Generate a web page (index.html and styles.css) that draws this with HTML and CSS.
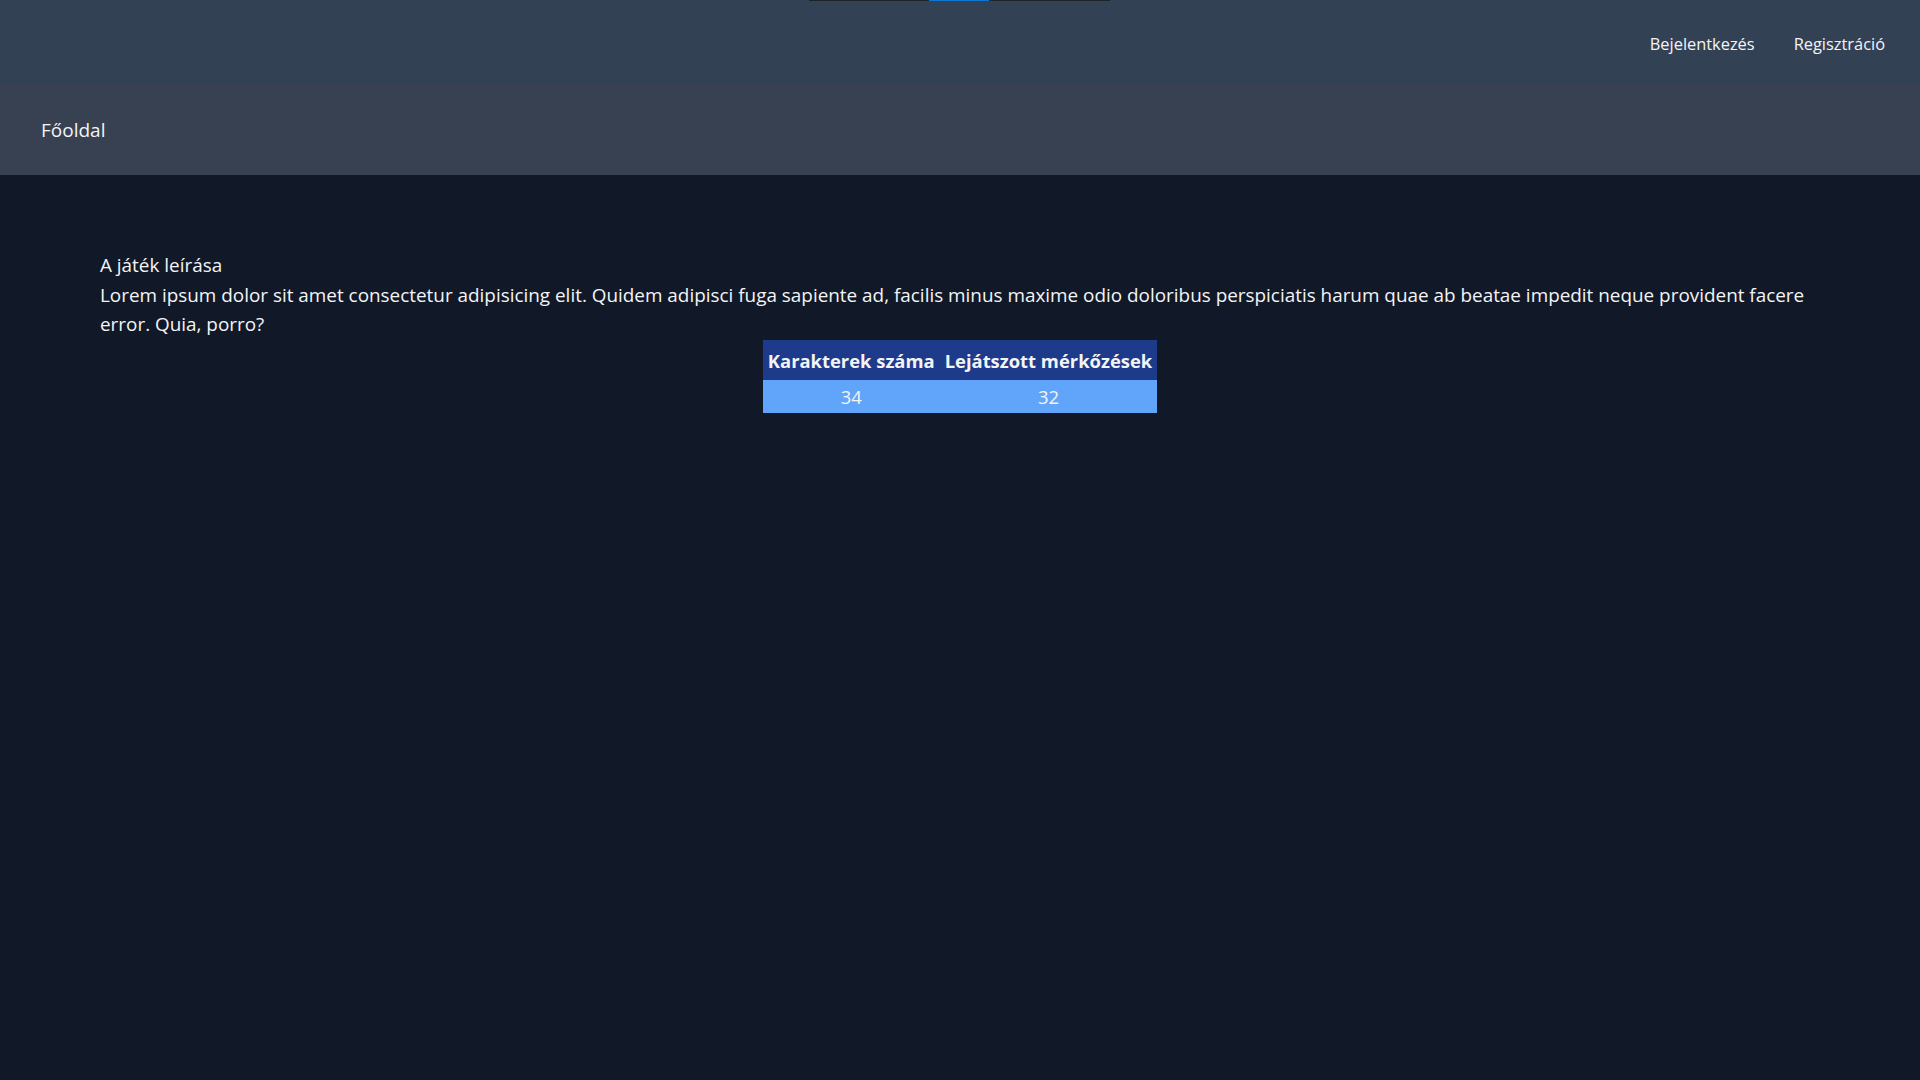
FILE: index.html
```html
<!DOCTYPE html>
<html lang="hu">
<head>
<meta charset="utf-8">
<title>Főoldal</title>
<link rel="stylesheet" href="styles.css">
</head>
<body>
<div class="loader"><span class="loader-fill"></span></div>
<header class="topbar">
  <a class="toplink" href="#">Bejelentkezés</a>
  <a class="toplink" href="#">Regisztráció</a>
</header>
<nav class="navbar">
  <a class="navlink" href="#">Főoldal</a>
</nav>
<main class="content">
  <h2 class="title">A játék leírása</h2>
  <p class="desc">Lorem ipsum dolor sit amet consectetur adipisicing elit. Quidem adipisci fuga sapiente ad, facilis minus maxime odio doloribus perspiciatis harum quae ab beatae impedit neque provident facere error. Quia, porro?</p>
  <table class="stats">
    <thead>
      <tr><th>Karakterek száma</th><th>Lejátszott mérkőzések</th></tr>
    </thead>
    <tbody>
      <tr><td>34</td><td>32</td></tr>
    </tbody>
  </table>
</main>
</body>
</html>
```
FILE: styles.css
```css
* { box-sizing: border-box; }
html, body { margin: 0; padding: 0; }
body {
  background: #111827;
  color: #f3f4f6;
  font-family: "Open Sans", "Noto Sans", sans-serif;
  min-height: 1080px;
  position: relative;
}
a { color: #f3f4f6; text-decoration: none; }

.loader {
  position: absolute;
  top: 0;
  left: 809px;
  width: 301px;
  height: 1px;
  background: #1f2328;
}
.loader-fill {
  position: absolute;
  left: 120px;
  top: 0;
  width: 60px;
  height: 1px;
  background: #0a78d4;
}

.topbar {
  height: 84px;
  background: #334155;
  display: flex;
  justify-content: flex-end;
  align-items: center;
  gap: 39px;
  padding: 3px 35px 0 0;
}
.toplink { font-size: 16.4px; }

.navbar {
  height: 91px;
  background: #374151;
  display: flex;
  align-items: center;
  padding: 0 41px;
}
.navlink { font-size: 19px; }

.content {
  padding: 76px 100px 0;
}
.title, .desc {
  margin: 0;
  font-size: 18.9px;
  font-weight: 400;
  line-height: 29.7px;
}
.stats {
  margin: 0 auto;
  border-collapse: collapse;
}
.stats th {
  background: #1e3a8a;
  font-weight: 700;
  font-size: 18.4px;
  height: 40px;
  padding: 0 5px;
}
.stats td {
  background: #60a5fa;
  font-size: 18.4px;
  height: 33px;
  text-align: center;
  padding: 0 5px;
}
```
